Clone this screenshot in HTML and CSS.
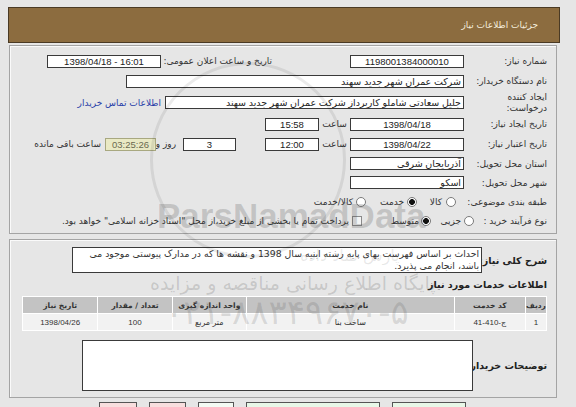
FILE: index.html
```html
<!DOCTYPE html>
<html lang="fa" dir="rtl">
<head>
<meta charset="utf-8">
<title>جزئیات اطلاعات نیاز</title>
<link rel="stylesheet" href="styles.css">
</head>
<body>
<div class="page">
  <div class="title-bar">جزئیات اطلاعات نیاز</div>

  <div class="panel p1">
    <div class="row r1">
      <div class="lbl">شماره نیاز:</div>
      <div class="box w112 c">1198001384000010</div>
      <div class="lbl2">تاریخ و ساعت اعلان عمومی:</div>
      <div class="box w112 c ltr">1398/04/18 - 16:01</div>
    </div>
    <div class="row r2">
      <div class="lbl">نام دستگاه خریدار:</div>
      <div class="box w336">شرکت عمران شهر جدید سهند</div>
    </div>
    <div class="row r3">
      <div class="lbl two">ایجاد کننده<br>درخواست:</div>
      <div class="box w297">جلیل سعادتی شاملو کاربرداز شرکت عمران شهر جدید سهند</div>
      <a class="link" href="#">اطلاعات تماس خریدار</a>
    </div>
    <div class="row r4">
      <div class="lbl">تاریخ ایجاد نیاز:</div>
      <div class="box w112 c">1398/04/18</div>
      <div class="sa">ساعت</div>
      <div class="box w52 c">15:58</div>
    </div>
    <div class="row r5">
      <div class="lbl">تاریخ اعتبار نیاز:</div>
      <div class="box w112 c">1398/04/22</div>
      <div class="sa">ساعت</div>
      <div class="box w52 c">12:00</div>
      <div class="box w51 c days">3</div>
      <div class="ruz">روز و</div>
      <div class="timer">03:25:26</div>
      <div class="remain">ساعت باقی مانده</div>
    </div>
    <div class="row r6">
      <div class="lbl">استان محل تحویل:</div>
      <div class="box w112">آذربایجان شرقی</div>
    </div>
    <div class="row r7">
      <div class="lbl">شهر محل تحویل:</div>
      <div class="box w112">اسکو</div>
    </div>
    <div class="row r8">
      <div class="lbl">طبقه بندی موضوعی:</div>
      <span class="radio a1"></span><span class="opt o1">کالا</span>
      <span class="radio on a2"></span><span class="opt o2">خدمت</span>
      <span class="radio a3"></span><span class="opt">کالا/خدمت</span>
    </div>
    <div class="row r9">
      <div class="lbl">نوع فرآیند خرید :</div>
      <span class="radio b1r"></span><span class="opt p1o">جزیی</span>
      <span class="radio on b2r"></span><span class="opt p2o">متوسط</span>
      <span class="check"></span><span class="opt">پرداخت تمام یا بخشی از مبلغ خرید،از محل "اسناد خزانه اسلامی" خواهد بود.</span>
    </div>
  </div>

  <div class="panel p2">
    <div class="drow">
      <div class="blbl">شرح کلی نیاز:</div>
      <div class="desc">احداث بر اساس فهرست بهای پایه رشته ابنیه سال 1398 و نقشه ها که در مدارک پیوستی موجود می باشد، انجام می پذیرد.</div>
    </div>
    <div class="heading">اطلاعات خدمات مورد نیاز</div>
    <table class="grid">
      <thead>
        <tr>
          <th class="c1">ردیف</th>
          <th class="c2">کد خدمت</th>
          <th class="c3">نام خدمت</th>
          <th class="c4">واحد اندازه گیری</th>
          <th class="c5">تعداد / مقدار</th>
          <th class="c6">تاریخ نیاز</th>
        </tr>
      </thead>
      <tbody>
        <tr>
          <td>1</td>
          <td>ج-410-41</td>
          <td>ساخت بنا</td>
          <td>متر مربع</td>
          <td>100</td>
          <td>1398/04/26</td>
        </tr>
      </tbody>
    </table>
    <div class="trow">
      <div class="blbl tl">توضیحات خریدار:</div>
      <div class="notes"></div>
    </div>
  </div>

  <div class="buttons">
    <span class="btn k1"></span>
    <span class="btn k2"></span>
    <span class="btn k3"></span>
    <span class="btn k4"></span>
    <span class="btn k5"></span>
  </div>
</div>

<div class="watermark" aria-hidden="true">
  <span class="wm-circle"></span>
  <span class="wm-en">ParsNamadData</span>
  <span class="wm-script">پارس نماد داده</span>
  <span class="wm-fa">پایگاه اطلاع رسانی مناقصه و مزایده</span>
  <span class="wm-tel">۰۲۱-۸۸۳۴۹۶۷۰-۵</span>
</div>
</body>
</html>
```

FILE: styles.css
```css
html, body {
  margin: 0;
  padding: 0;
}
body {
  background: #e6e6e6;
  font-family: "Liberation Sans", "DejaVu Sans", sans-serif;
  font-size: 9px;
  color: #333;
  width: 576px;
  height: 407px;
  overflow: hidden;
  position: relative;
}
.page {
  padding: 7px 16px 0 8px;
  display: flex;
  flex-direction: column;
}
.title-bar {
  height: 34px;
  background: #8c6c3f;
  border: 1px solid #4a3a24;
  color: #f4ecdc;
  font-family: "DejaVu Sans", sans-serif;
  font-size: 9px;
  display: flex;
  align-items: center;
  padding-right: 21px;
}
.panel {
  margin-left: 1px;
  margin-right: 3px;
  border: 1px solid #a4a4a4;
  box-shadow: inset 1px 1px 0 #fafafa;
  background: #e6e6e6;
  display: flex;
  flex-direction: column;
}
.p1 {
  margin-top: 2px;
  padding: 5px 9px 3px 0;
  height: 179px;
}
.p2 {
  margin-top: 5px;
  padding: 7px 9px 4px 0;
  height: 146px;
}
.row {
  display: flex;
  align-items: center;
  height: 20px;
  white-space: nowrap;
}
.r3 { height: 23px; }
.r6, .r7 { height: 19px; }
.r9 { height: 18px; }
.lbl {
  width: 80px;
  margin-left: 3px;
  font-family: "DejaVu Sans", sans-serif;
  font-size: 9px;
  text-align: right;
  color: #333;
}
.r9 .lbl { width: 70px; }
.lbl.two {
  line-height: 11px;
}
.lbl2 {
  width: 107px;
  margin-right: 78px;
  margin-left: 4px;
  font-family: "DejaVu Sans", sans-serif;
  text-align: right;
}
.box {
  height: 11px;
  line-height: 11px;
  border: 1px solid #3a3a3a;
  background: #fff;
  color: #222;
  padding: 0 2px;
  font-size: 9.5px;
  font-family: "Liberation Sans", "DejaVu Sans", sans-serif;
  text-align: right;
  overflow: hidden;
  box-sizing: content-box;
}
.box.c { text-align: center; }
.ltr { direction: ltr; }
.w112 { width: 108px; }
.w336 { width: 332px; }
.w297 { width: 293px; }
.w52 { width: 48px; }
.w51 { width: 47px; }
.sa {
  width: 25px;
  margin-right: 3px;
  margin-left: 3px;
  font-family: "DejaVu Sans", sans-serif;
  text-align: center;
}
.days { margin-right: 29px; }
.ruz {
  width: 14px;
  margin-right: 7px;
  font-family: "DejaVu Sans", sans-serif;
  text-align: center;
}
.timer {
  width: 49px;
  height: 11px;
  line-height: 11px;
  margin-right: 6px;
  border: 1px solid #a8a880;
  background: #e9e9c4;
  color: #6a6a50;
  text-align: center;
  font-size: 9.5px;
}
.remain {
  margin-right: 4px;
  font-family: "DejaVu Sans", sans-serif;
}
.link {
  margin-right: 4px;
  color: #2840a8;
  text-decoration: none;
  font-family: "DejaVu Sans", sans-serif;
}
.radio {
  width: 8px;
  height: 8px;
  border: 1px solid #7a7a7a;
  border-radius: 50%;
  background: #fff;
  flex: none;
  box-sizing: content-box;
}
.radio.on {
  background: radial-gradient(circle, #111 0 2.6px, #fff 3.2px);
}
.opt {
  font-family: "DejaVu Sans", sans-serif;
  color: #333;
  text-align: right;
  margin-right: 3px;
}
.a1 { margin-right: 8px; }
.o1 { width: 20px; margin-right: 4px; }
.a2 { margin-right: 5px; }
.o2 { width: 17px; }
.a3 { margin-right: 21px; }
.b1r { margin-right: 0; }
.p1o { width: 22px; }
.b2r { margin-right: 8px; }
.p2o { width: 30px; margin-right: 2px; }
.check {
  width: 8px;
  height: 8px;
  border: 1px solid #8a8a8a;
  background: #f4f4f4;
  margin-right: 27px;
  flex: none;
}

.drow {
  display: flex;
  align-items: center;
  height: 26px;
}
.blbl {
  width: 62px;
  margin-left: 3px;
  font-family: "DejaVu Sans", sans-serif;
  font-weight: bold;
  font-size: 9.5px;
  color: #222;
  text-align: right;
  white-space: nowrap;
}
.desc {
  width: 404px;
  height: 24px;
  border: 1px solid #3a3a3a;
  background: #fff;
  padding: 0 2px;
  font-family: "DejaVu Sans", sans-serif;
  font-size: 9.3px;
  line-height: 12px;
  color: #333;
  overflow: hidden;
}
.heading {
  margin-top: 6px;
  height: 12px;
  line-height: 12px;
  font-family: "DejaVu Sans", sans-serif;
  font-weight: bold;
  font-size: 9.5px;
  color: #222;
}
.grid {
  margin-top: 5px;
  margin-left: 11px;
  width: 525px;
  border-collapse: separate;
  border-spacing: 1px;
  background: #fff;
  font-family: "Liberation Sans", "DejaVu Sans", sans-serif;
  font-size: 8px;
}
.grid th {
  background: #c3c3c3;
  height: 16px;
  padding: 0;
  font-family: "DejaVu Sans", sans-serif;
  font-weight: bold;
  color: #333;
  font-size: 7.5px;
}
.grid td {
  background: #f2f2f2;
  height: 16px;
  padding: 0;
  text-align: center;
  color: #333;
}
.c1 { width: 20px; }
.c2 { width: 70px; }
.c3 { width: 206px; }
.c4 { width: 73px; }
.c5 { width: 73px; }
.c6 { width: 74px; }
.trow {
  margin-top: 9px;
  display: flex;
  align-items: center;
}
.tl { width: 71px; margin-left: 3px; }
.notes {
  width: 389px;
  height: 49px;
  border: 1px solid #3a3a3a;
  background: #fff;
}
.buttons {
  direction: ltr;
  display: flex;
  margin-top: 4px;
  margin-left: 91px;
  gap: 12px;
}
.btn {
  height: 20px;
  border: 1px solid #555;
  flex: none;
}
.k1 { width: 36px; background: #f8dede; }
.k2 { width: 35px; background: #f8dede; }
.k3 { width: 34px; background: #f4fbf4; }
.k4 { width: 132px; background: #e8f8e8; }
.k5 { width: 72px; background: #e8f8e8; }

.watermark {
  position: absolute;
  inset: 0;
  pointer-events: none;
}
.watermark span {
  position: absolute;
  white-space: nowrap;
}
.wm-circle {
  left: 150px;
  top: 62px;
  width: 190px;
  height: 190px;
  border: 3px solid rgba(0, 0, 0, 0.08);
  border-radius: 50%;
}
.wm-en {
  left: 157px;
  top: 196px;
  font-family: "Liberation Sans", sans-serif;
  font-weight: bold;
  font-size: 35px;
  color: rgba(70, 70, 70, 0.22);
}
.wm-script {
  left: 300px;
  top: 246px;
  font-family: "DejaVu Sans", sans-serif;
  font-size: 16px;
  color: rgba(70, 70, 70, 0.12);
}
.wm-fa {
  left: 150px;
  top: 272px;
  font-family: "DejaVu Sans", sans-serif;
  font-size: 19px;
  color: rgba(70, 70, 70, 0.2);
}
.wm-tel {
  left: 165px;
  top: 292px;
  font-family: "DejaVu Sans", sans-serif;
  font-size: 34px;
  color: rgba(70, 70, 70, 0.16);
}
```
